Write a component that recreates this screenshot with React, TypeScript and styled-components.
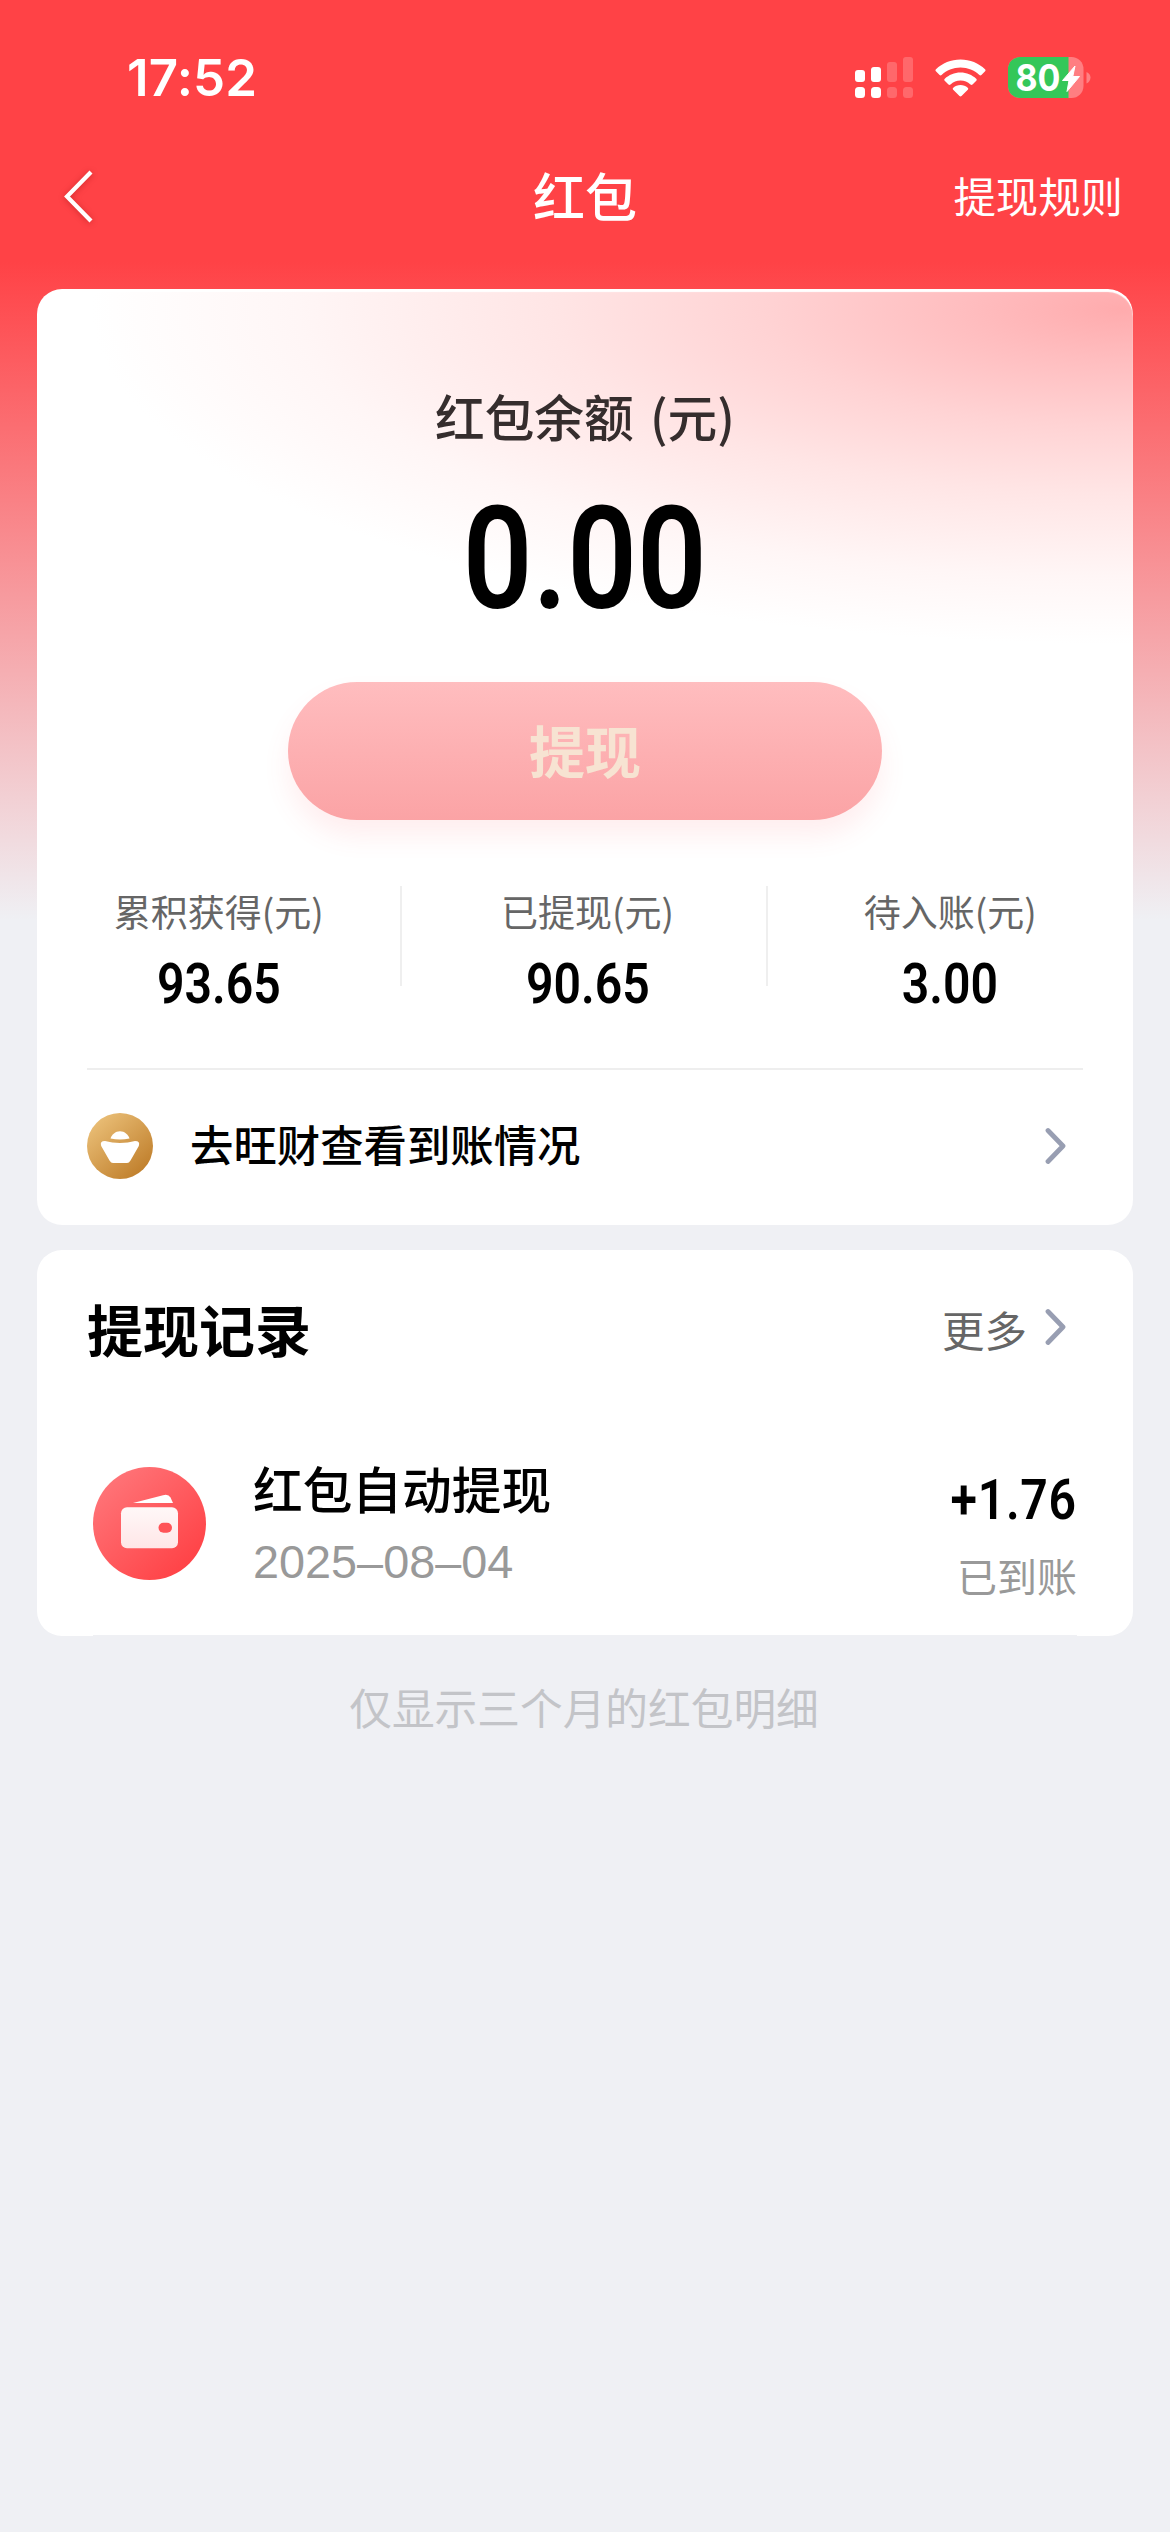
import React from "react";
import styled, { createGlobalStyle } from "styled-components";

const cjk = `"Noto Sans CJK SC", sans-serif`;

const GlobalStyle = createGlobalStyle`
  * { box-sizing: border-box; }
  body { margin: 0; background: #eff0f4; font-family: ${cjk}; }
`;

const Page = styled.div`
  width: 1170px;
  height: 2532px;
  overflow: hidden;
  display: flex;
  flex-direction: column;
  background: linear-gradient(180deg, #ff4246 0, #ff4246 262px, #eff0f4 920px);
`;

const StatusBar = styled.div`
  height: 156px;
  padding: 0 79px 0 127px;
  display: flex;
  align-items: center;
  justify-content: space-between;
`;

const Clock = styled.div`
  font: 600 51px/60px Inter, sans-serif;
  letter-spacing: 0.2px;
  color: #fff;
`;

const StatusIcons = styled.div`
  display: flex;
  align-items: center;
  gap: 22px;
`;

const NavBar = styled.header`
  height: 80px;
  padding: 0 47px 0 60px;
  display: grid;
  grid-template-columns: 1fr auto 1fr;
  align-items: center;
  color: #fff;
`;

const BackIcon = styled.svg`
  width: 36px;
  height: 56px;
  filter: drop-shadow(0 1px 3px rgba(120, 0, 0, 0.35));
`;

const NavTitle = styled.h1`
  margin: 0 13px 3px 0;
  font: 500 52px/77px ${cjk};
`;

const NavLink = styled.div`
  justify-self: end;
  margin-bottom: 2px;
  font: 400 42.4px/78px ${cjk};
`;

const Content = styled.main`
  margin-top: 53px;
  padding: 0 37px;
  display: flex;
  flex-direction: column;
  gap: 25px;
`;

const Card = styled.section`
  border-radius: 25px;
  background: #fff;
  display: flex;
  flex-direction: column;
`;

const BalanceCard = styled(Card)`
  height: 936px;
  align-items: center;
  box-shadow: inset 0 3px 1px #fff;
  background: radial-gradient(
      1030px 335px at 1085px 20px,
      #ffabad 0%,
      #ffbdbf 15%,
      #ffd3d4 35%,
      #ffe5e5 55%,
      #fff6f6 80%,
      #fff 100%
    )
    #fff;
`;

const BalanceLabel = styled.div`
  margin-top: 90px;
  font: 500 49.7px/72px ${cjk};
  word-spacing: 5px;
  color: #352d2d;
`;

const Digits = styled.div<{ $size: number; $origin?: string; $spacing?: number }>`
  font-family: Roboto, sans-serif;
  font-weight: 600;
  font-size: ${(p) => p.$size}px;
  line-height: 1;
  letter-spacing: ${(p) => p.$spacing ?? 0}px;
  color: #000;
  transform: scaleX(0.86);
  transform-origin: ${(p) => p.$origin ?? "center"};
`;

const BalanceAmount = styled.div`
  margin-top: 38px;
  height: 144px;
`;

const WithdrawButton = styled.button`
  margin: 49px 0 0;
  padding: 0 0 5px;
  width: 594px;
  height: 138px;
  border: 0;
  border-radius: 69px;
  background: linear-gradient(180deg, #ffbdbf, #fba3a5);
  box-shadow: 0 16px 26px rgba(255, 90, 95, 0.1);
  font: 700 56px/133px ${cjk};
  color: #f7e3d2;
`;

const Stats = styled.div`
  align-self: stretch;
  margin-top: 66px;
  display: grid;
  grid-template-columns: repeat(3, 1fr);
  grid-template-rows: 100px;
`;

const Stat = styled.div`
  display: flex;
  flex-direction: column;
  align-items: center;
  border-right: 2px solid #efefef;
  &:nth-child(2) {
    padding-left: 7px;
  }
  &:last-child {
    border-right: 0;
  }
`;

const StatLabel = styled.div`
  font: 400 37px/51px ${cjk};
  color: #666;
  margin-bottom: 19px;
`;

const Rule = styled.div`
  width: 996px;
  height: 2px;
  margin-top: 82px;
  background: #eee;
`;

const AccountRow = styled.div`
  align-self: stretch;
  flex: 1;
  padding: 0 66px 3px 50px;
  display: flex;
  align-items: center;
`;

const AccountText = styled.div`
  margin: 0 0 6px 37px;
  flex: 1;
  font: 500 43.4px/60px ${cjk};
  color: #000;
`;

const RecordCard = styled(Card)`
  height: 386px;
`;

const RecordHeader = styled.div`
  height: 162px;
  padding: 0 66px 0 50px;
  display: flex;
  align-items: center;
  justify-content: space-between;
`;

const RecordTitle = styled.h2`
  margin: 0 0 7px;
  font: 700 56px/80px ${cjk};
  color: #000;
`;

const More = styled.div`
  display: flex;
  align-items: center;
  gap: 18px;
  margin-bottom: 5px;
  font: 400 42.5px/60px ${cjk};
  color: #666;
  svg {
    margin-bottom: 4px;
  }
`;

const Record = styled.div`
  flex: 1;
  margin: 0 56px;
  border-bottom: 1px solid #eff0f4;
  display: flex;
`;

const WalletIcon = styled.svg`
  width: 113px;
  height: 113px;
  margin-top: 55px;
`;

const RecordInfo = styled.div`
  margin: 39px 0 0 47px;
  flex: 1;
`;

const RecordName = styled.div`
  font: 500 49.7px/72px ${cjk};
  color: #000;
`;

const RecordDate = styled.div`
  margin-top: 11px;
  font: 400 46.8px/56px "Liberation Sans", sans-serif;
  color: #999;
`;

const RecordResult = styled.div`
  margin-top: 60px;
  display: flex;
  flex-direction: column;
  align-items: flex-end;
`;

const RecordStatus = styled.div`
  margin-top: 17px;
  font: 400 40px/60px ${cjk};
  color: #999;
`;

const Footnote = styled.footer`
  margin: 38px 2px 0 0;
  text-align: center;
  font: 400 42.7px/64px ${cjk};
  color: #c3c4c8;
`;

const Signal = () => (
  <svg width="58" height="42" viewBox="0 0 58 42" fill="#fff">
    <rect x="0" y="13" width="10" height="12" rx="3" />
    <rect x="16" y="10" width="10" height="15" rx="3" />
    <rect x="0" y="30" width="10" height="11" rx="3.5" />
    <rect x="16" y="30" width="10" height="11" rx="3.5" />
    <g opacity="0.2">
      <rect x="32" y="5" width="10" height="20" rx="3" />
      <rect x="48" y="0" width="10" height="25" rx="3" />
      <rect x="32" y="30" width="10" height="11" rx="3.5" />
      <rect x="48" y="30" width="10" height="11" rx="3.5" />
    </g>
  </svg>
);

const Wifi = () => (
  <svg width="51" height="38" viewBox="0 0 51 38" fill="#fff">
    <path d="M25.5 0.5C35 0.5 43.700 4.200 50 10.200C50.700 10.900 50.700 11.700 50.100 12.300L46.400 16C45.800 16.600 45 16.600 44.400 16C39.400 11.300 32.800 8.500 25.500 8.500C18.200 8.500 11.600 11.300 6.600 16C6 16.600 5.200 16.600 4.600 16L0.900 12.300C0.300 11.700 0.300 10.900 1 10.200C7.300 4.200 16 0.500 25.500 0.500Z" />
    <path d="M25.500 13.500C31.600 13.500 37.100 15.900 41.200 19.700C41.900 20.400 41.900 21.200 41.300 21.800L37.500 25.500C36.900 26.100 36.200 26.100 35.500 25.500C32.800 23 29.400 21.500 25.500 21.500C21.600 21.500 18.200 23 15.500 25.500C14.800 26.100 14.100 26.100 13.500 25.500L9.700 21.800C9.100 21.200 9.100 20.400 9.800 19.700C13.900 15.900 19.400 13.500 25.500 13.500Z" />
    <path d="M25.500 26C28.300 26 30.800 27 32.700 28.700C33.400 29.300 33.400 30.100 32.800 30.700L26.500 37C25.900 37.600 25.100 37.600 24.500 37L18.200 30.700C17.600 30.100 17.600 29.300 18.300 28.700C20.200 27 22.700 26 25.500 26Z" />
  </svg>
);

const Battery = () => (
  <svg width="83" height="54" viewBox="0 -6 83 54">
    <defs>
      <clipPath id="battery-body">
        <rect width="75.500" height="41" rx="12" />
      </clipPath>
    </defs>
    <g clipPath="url(#battery-body)">
      <rect width="76" height="41" fill="#ff7e81" />
      <rect width="60.500" height="41" fill="#34c759" />
    </g>
    <path d="M78.500 15C81 16 82.500 18 82.500 20.500C82.500 23 81 25.500 78.500 26.500Z" fill="#ff8083" />
    <text x="7.500" y="34.300" fontFamily="Inter, sans-serif" fontWeight="700" fontSize="37" textLength="45" lengthAdjust="spacingAndGlyphs" fill="#fff">
      80
    </text>
    <path d="M67 9L54.500 23.500H61L59 34.500L71.500 19.500H64.800Z" fill="#fff" stroke="#fff" strokeWidth="1" strokeLinejoin="round" />
  </svg>
);

const Chevron = () => (
  <svg width="22" height="38" viewBox="0 0 22 38">
    <path d="M3 3.500L18 19L3 34.500" fill="none" stroke="#989eb2" strokeWidth="4.800" strokeLinecap="round" strokeLinejoin="round" />
  </svg>
);

const IngotIcon = () => (
  <svg width="66" height="66" viewBox="0 0 66 66">
    <defs>
      <linearGradient id="gold" x1="0.150" y1="0.100" x2="0.850" y2="0.900">
        <stop offset="0" stopColor="#e9bd75" />
        <stop offset="1" stopColor="#c07f2c" />
      </linearGradient>
    </defs>
    <circle cx="33" cy="33" r="33" fill="url(#gold)" />
    <path d="M23.500 25.500C24.800 21.500 28.300 18.200 33 18.200S41.200 21.500 42.500 25.500Q33 27.500 23.500 25.500Z" fill="#fff" />
    <path d="M18 28Q25 30 33 30T48 28Q53.500 28 51.800 33L43.500 47.500Q42 50 40 50H26Q24 50 22.500 47.500L14.200 33Q12.500 28 18 28Z" fill="#fff" />
  </svg>
);

const Wallet = () => (
  <WalletIcon viewBox="0 0 113 113">
    <defs>
      <linearGradient id="wallet-bg" x1="0.100" y1="0.100" x2="0.850" y2="0.900">
        <stop offset="0" stopColor="#ff7579" />
        <stop offset="1" stopColor="#ff4246" />
      </linearGradient>
      <linearGradient id="wallet-body" x1="0" y1="0" x2="0" y2="1">
        <stop offset="0" stopColor="#fff8f8" />
        <stop offset="1" stopColor="#ffe6e7" />
      </linearGradient>
    </defs>
    <circle cx="56.500" cy="56.500" r="56.500" fill="url(#wallet-bg)" />
    <path d="M40 36L70 28.200Q75.500 26.800 77.500 30.500L80 36Z" fill="#fff" />
    <rect x="28" y="40.300" width="57" height="41" rx="6" fill="url(#wallet-body)" />
    <rect x="65.500" y="55.800" width="13.500" height="10" rx="5" fill="#ff5357" />
  </WalletIcon>
);

const stats = [
  { label: "累积获得(元)", value: "93.65" },
  { label: "已提现(元)", value: "90.65" },
  { label: "待入账(元)", value: "3.00" },
];

export default function App() {
  return (
    <>
      <GlobalStyle />
      <Page>
        <StatusBar>
          <Clock>17:52</Clock>
          <StatusIcons>
            <Signal />
            <Wifi />
            <Battery />
          </StatusIcons>
        </StatusBar>
        <NavBar>
          <BackIcon viewBox="0 0 36 56" fill="none">
            <path d="M31 4L7 28.500L31 53" stroke="#fff" strokeWidth="4.200" />
          </BackIcon>
          <NavTitle>红包</NavTitle>
          <NavLink>提现规则</NavLink>
        </NavBar>
        <Content>
          <BalanceCard>
            <BalanceLabel>红包余额 (元)</BalanceLabel>
            <BalanceAmount>
              <Digits $size={142}>0.00</Digits>
            </BalanceAmount>
            <WithdrawButton>提现</WithdrawButton>
            <Stats>
              {stats.map((s) => (
                <Stat key={s.label}>
                  <StatLabel>{s.label}</StatLabel>
                  <Digits $size={56}>{s.value}</Digits>
                </Stat>
              ))}
            </Stats>
            <Rule />
            <AccountRow>
              <IngotIcon />
              <AccountText>去旺财查看到账情况</AccountText>
              <Chevron />
            </AccountRow>
          </BalanceCard>
          <RecordCard>
            <RecordHeader>
              <RecordTitle>提现记录</RecordTitle>
              <More>
                更多
                <Chevron />
              </More>
            </RecordHeader>
            <Record>
              <Wallet />
              <RecordInfo>
                <RecordName>红包自动提现</RecordName>
                <RecordDate>2025–08–04</RecordDate>
              </RecordInfo>
              <RecordResult>
                <Digits $size={56} $origin="right" $spacing={0.8}>
                  +1.76
                </Digits>
                <RecordStatus>已到账</RecordStatus>
              </RecordResult>
            </Record>
          </RecordCard>
        </Content>
        <Footnote>仅显示三个月的红包明细</Footnote>
      </Page>
    </>
  );
}
